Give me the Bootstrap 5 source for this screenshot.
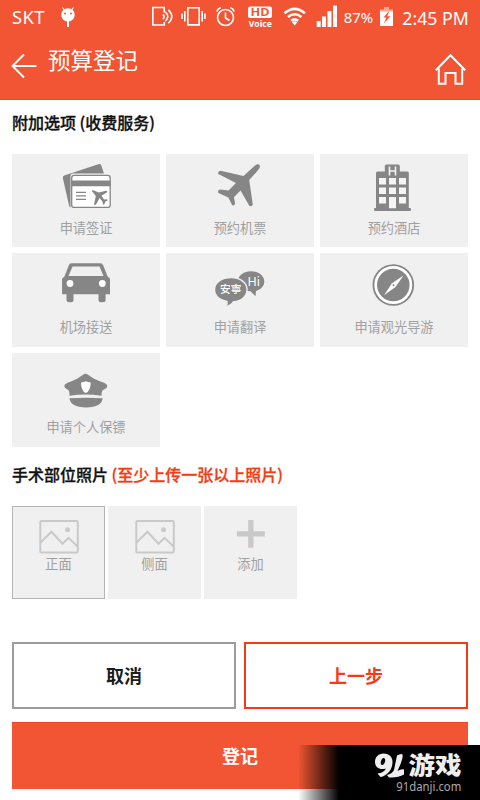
<!DOCTYPE html>
<html lang="zh-CN">
<head>
<meta charset="utf-8">
<meta name="viewport" content="width=device-width, initial-scale=1">
<title>预算登记</title>
<link href="https://cdn.jsdelivr.net/npm/bootstrap@5.3.0/dist/css/bootstrap.min.css" rel="stylesheet">
<style>
  body { font-family: "Liberation Sans", "Noto Sans CJK SC", sans-serif; color: #222; }
  .screen { width: 480px; height: 800px; }
  .topbar { background: #f25533; height: 100px; border-bottom: 1px solid #ee4523; }
  .statusbar { height: 34px; font-family: "Noto Sans", sans-serif; line-height: 33px; white-space: nowrap; }
  .carrier { width: 56px; padding-left: 12px; font-size: 18.5px; letter-spacing: .3px; }
  .statusbar svg { display: block; }
  .titlebar { height: 66px; }
  .title { font-size: 22.5px; line-height: 30px; margin: 13px 0 0 10px; }
  .home { margin: 18px 13px 0 0; }
  .section-title { font-family: "Noto Sans CJK SC", sans-serif; font-size: 16px; font-weight: 500; line-height: 24px; white-space: nowrap; color: #111; -webkit-text-stroke: .3px; }
  .first-title { padding-top: 10px; }
  .photo-title { padding-top: 15px; }
  .hint { color: #f43c14; }
  .options { display: grid; grid-template-columns: repeat(3, 148px); grid-template-rows: 93px 94px 94px; gap: 6px; margin-top: 20px; }
  .tile { background: #f0f0f0; padding-top: 6px; color: #a0a0a0; font-family: "Noto Sans CJK SC", sans-serif; font-size: 13.2px; line-height: 18px; }
  .tile .caption-text { margin-top: 7px; }
  .glyph { fill: #868686; }
  .photos { gap: 3px; margin-top: 20px; }
  .photo { width: 93px; height: 93px; background: #f0f0f0; color: #a0a0a0; font-family: "Noto Sans CJK SC", sans-serif; font-size: 13.2px; line-height: 18px; padding-top: 12px; }
  .photo svg { margin-bottom: -1px; }
  .photo.selected { box-shadow: inset 0 0 0 1px #b4b4b4; }
  .actions { margin-top: 43px; }
  .action { height: 67px; font-family: "Noto Sans CJK SC", sans-serif; font-size: 18px; font-weight: 700; border-radius: 0; padding: 0; }
  .action-cancel { border: 2px solid #9c9c9c; color: #1c1c1c; }
  .action-prev { border: 2px solid #f43c14; color: #f43c14; }
  .action-submit { background: #f25533; color: #fff; border: 0; border-top: 1px solid #f04422; margin-top: 13px; padding-bottom: 2px; }
  .watermark { right: 0; bottom: 0; width: 182px; height: 55px; background: linear-gradient(90deg, transparent 0, #000 41px); }
</style>
</head>
<body class="bg-white">
<div class="screen position-relative overflow-hidden bg-white">
  <header class="topbar text-white">
    <div class="statusbar d-flex">
      <span class="carrier">SKT</span>
      <svg width="288" height="34" viewBox="56 0 288 34" fill="none" stroke="#fff" stroke-width="1.6">
        <path d="M61.300 14.500a6.700 6.200 0 0 1 13.400 0c0 4.500-3 6.500-5.700 7v5.500h-2v-5.500c-2.700-.5-5.700-2.500-5.700-7z" fill="#fff" stroke="none"/>
        <path d="M64.500 10l-2-2.500M71.500 10l2-2.500" stroke-width="1.200"/>
        <circle cx="65" cy="13.500" r="1" fill="#f25533" stroke="none"/><circle cx="71" cy="13.500" r="1" fill="#f25533" stroke="none"/>
        <path d="M164.300 12.500V7.500h-11.500v17.500h11.500v-3M162.800 14.500q2.800 2 0 4.500M165.300 12q5 4.500 0 9.200M168.300 9.800q7 6.500 0 13.500"/>
        <path d="M187.800 7.700h11.400v17.200h-11.400zM184.800 11v10.500M182 13.500v5.500M202.200 11v10.500M205 13.500v5.500"/>
        <circle cx="225.500" cy="17.500" r="8"/><path d="M225.500 12.500v5.500l4 2.500M216.800 11.500q1-3 4-4M234.200 11.500q-1-3-4-4"/>
        <rect x="248" y="6.500" width="24" height="11.500" rx="2" fill="#fff" stroke="none"/>
        <g stroke="none" font-family="Open Sans, sans-serif" font-weight="700" text-anchor="middle">
          <text x="260" y="16.200" font-size="11.300" fill="#f25533" textLength="19" lengthAdjust="spacingAndGlyphs">HD</text>
          <text x="260.300" y="26.500" font-size="8.300" fill="#fff" textLength="23" lengthAdjust="spacingAndGlyphs">Voice</text>
        </g>
        <path d="M284.500 13.300q10.200-8.800 20.400 0M288 17q6.700-5.500 13.400 0M291.200 20.700q3.500-2.800 7 0" stroke-width="2.600"/>
        <path d="M292 22.300q2.700-2 5.400 0l-2.700 3.200z" fill="#fff" stroke="none"/>
        <path d="M316.700 21h4v6h-4zM322 16.500h4V27h-4zM327.500 11h4v16h-4zM333 5.500h4V27h-4z" fill="#fff" stroke="none"/>
      </svg>
      <svg width="33" height="34" viewBox="344 0 33 34"><text x="343.700" y="23.300" font-size="15" fill="#fff" textLength="29.500" lengthAdjust="spacingAndGlyphs">87%</text></svg>
      <svg width="25" height="34" viewBox="377 0 25 34">
        <path d="M384 7h5v2.500h4v3h-13.200v-3H384z" fill="#f9aa99"/><path d="M380 11.500h13V26h-13z" fill="#fff"/>
        <path d="M389.500 10.500l-6 7h3l-2.800 6.300 6.800-7.500h-3.200z" fill="#f25533"/>
      </svg>
      <svg width="70" height="34" viewBox="402 0 70 34"><text x="402.300" y="24.500" font-size="17.500" fill="#fff" textLength="66.500" lengthAdjust="spacingAndGlyphs">2:45 PM</text></svg>
    </div>
    <div class="titlebar d-flex align-items-start">
      <svg width="38" height="66" viewBox="0 34 38 66" fill="none" stroke="#fff" stroke-width="1.900"><path d="M36.500 66H13M24 54.500L12.500 66 24 77.500"/></svg>
      <h1 class="title fw-normal">预算登记</h1>
      <svg class="home ms-auto" width="34" height="36" viewBox="433 52 34 36" fill="none" stroke="#fff" stroke-width="2"><path d="M435.800 70.300l14.700-15.100 14.700 15.100M438.800 68.500v15.300h6.700V73h10v10.800h6.700V68.500"/></svg>
    </div>
  </header>

  <main class="px-2 mx-1">
    <h2 class="section-title first-title mb-0">附加选项 (收费服务)</h2>
    <section class="options text-center">
      <div class="tile d-flex flex-column align-items-center">
        <svg class="glyph" width="56" height="52" viewBox="58 160 56 52">
          <path d="M64.300 175.500l34-11.200q2.200-.7 3 1.300l2.700 8H73q-2.500 0-2.500 2.500v31.400q-1-.3-1.300-1.500l-6.300-27.500q-.5-2.300 1.400-3z"/>
          <rect x="71.700" y="175.400" width="38.500" height="32" rx="2.500" fill="#fff" stroke="#868686" stroke-width="1.300"/>
          <path d="M71.500 180.500h39v5.700h-39zM76 191.800h10v1.300H76zm0 3.500h10v1.300H76zm0 3.500h10v1.300H76z"/>
          <path d="M92 189.700l6.800 2.700 7.200-1.700q2 .2.700 1.700l-5.200 3.300 2.600 3.800 3-.3.500 1.300-2.400 1.300-.8 2.500-1.400.5-.4-3-3-3.700-3.500 6.500q-2 1.200-2-.5l1.700-8-3.800-4.900q-.2-1.500 1.100-1.500z"/>
        </svg>
        <span class="caption-text">申请签证</span>
      </div>
      <div class="tile d-flex flex-column align-items-center">
        <svg class="glyph" width="56" height="52" viewBox="212 160 56 52">
          <path d="M243.500 176L255 165.500c3-2.500 6-1 4.500 2.500-1 2.200-6.500 7.800-10.300 12.100l3.600 24.400c-1 2.200-2.500 1.900-3.500 1.300l-8.800-15.300-6.600 6.700 1.200 6.500c-.6 1.600-2.300 2.300-3 1.300l-3.800-7.400-9.800-4.600c-1.300-1.500.2-3 1.600-3.400l8.500.8 7.300-7.300-17.500-9c-1-1.500.8-3.200 2.200-3.300z"/>
        </svg>
        <span class="caption-text">预约机票</span>
      </div>
      <div class="tile d-flex flex-column align-items-center">
        <svg class="glyph" width="56" height="52" viewBox="366 160 56 52">
          <path d="M384.800 171.500v-5.500q0-1.500 1.500-1.500h12q1.500 0 1.500 1.500v5.500h7.500q1.500 0 1.500 1.500v35.500H376V173q0-1.500 1.500-1.500z"/>
          <rect x="374" y="208" width="37" height="3" rx="1.300"/>
          <path fill="#f5f5f5" d="M379 178h7v6.500h-7zm10 0h7v6.500h-7zm10 0h7v6.500h-7zM379 187.500h7v6.500h-7zm10 0h7v6.500h-7zm10 0h7v6.500h-7zM379 197h7v6.500h-7zm20 0h7v6.500h-7zM389 197h7v11.300h-7z"/>
          <path d="M389.500 166.500v9M395.500 166.500v9M389.500 171h6" stroke="#f3f3f3" stroke-width="1.600"/>
        </svg>
        <span class="caption-text">预约酒店</span>
      </div>
      <div class="tile d-flex flex-column align-items-center">
        <svg class="glyph" width="56" height="52" viewBox="58 259 56 52">
          <path fill-rule="evenodd" d="M71.500 263.200h29q2 0 2.700 2l4.300 11 2.500 2.500v15.600h-4.400v5.500q0 2.500-3 2.500h-1.600q-2.500 0-2.500-2.500v-5.500h-25v5.500q0 2.500-2.500 2.500h-1.500q-3 0-3-2.500v-5.500h-4.400v-15.600l2.500-2.500 4.200-11q.7-2 2.700-2zM72.500 266.500L68.500 276h35l-4-9.500z"/>
          <circle cx="70" cy="283.500" r="3.400" fill="#fff"/><circle cx="102.300" cy="283.500" r="3.400" fill="#fff"/>
        </svg>
        <span class="caption-text">机场接送</span>
      </div>
      <div class="tile d-flex flex-column align-items-center">
        <svg class="glyph" width="56" height="52" viewBox="212 259 56 52">
          <path d="M251 271.300c7.500 0 13.300 4.500 13.300 10.200 0 4.400-3.300 8-8.300 9.500l-.5 5.300-5-5c-8-.2-12.700-4.500-12.700-9.800 0-5.700 5.800-10.200 13.200-10.200z"/>
          <path stroke="#f0f0f0" stroke-width="1.400" d="M231 277.500c9 0 16 5 16 12s-5.500 11.600-13.500 12.200c-1.500 2.300-4.300 4.200-7.500 4.800 1.200-2 1.300-3.500 1-5-7.200-1.200-12.500-5.700-12.500-12 0-7 7.300-12 16.500-12z"/>
          <text x="220" y="293" font-family="Noto Sans CJK SC" font-size="10.700" font-weight="500" fill="#fff">安寧</text>
          <text x="247.500" y="286" font-family="Noto Sans" font-size="12.500" fill="#fff">Hi</text>
        </svg>
        <span class="caption-text">申请翻译</span>
      </div>
      <div class="tile d-flex flex-column align-items-center">
        <svg class="glyph" width="56" height="52" viewBox="366 259 56 52">
          <circle cx="393.300" cy="285" r="20.800"/><circle cx="393.300" cy="285" r="17.600" fill="none" stroke="#fff" stroke-width="2.700"/>
          <path fill="#fff" d="M403.500 275.500l-8 11.500-11.500 8.300 8-12z"/><circle cx="393.500" cy="285.300" r="1"/>
        </svg>
        <span class="caption-text">申请观光导游</span>
      </div>
      <div class="tile d-flex flex-column align-items-center">
        <svg class="glyph" width="56" height="52" viewBox="58 359 56 52">
          <path d="M83 374.800q2.500-2 5 0l5.500 3.700q4 2 10.500 4.200 3.300 1.300 3.300 3.300t-3.300 3.500q-3 1.200-2.300 6.300-16-2.700-32.300 0 .5-5.100-1.800-6.300-3.300-1.500-3.300-3.500t3.300-3.300q6-2.200 10-4.200z"/>
          <path d="M69.500 398.300q16.300-1.300 33.200 0-1 9-16.600 9.200-15.600-.2-16.600-9.200z"/>
          <path fill="#fff" d="M81 382.500q3-.3 4.800-1.300 1.800 1 4.900 1.300 0 8.500-4.900 10.500-4.800-2-4.800-10.500z"/>
        </svg>
        <span class="caption-text">申请个人保镖</span>
      </div>
    </section>

    <h2 class="section-title photo-title mb-0">手术部位照片 <span class="hint">(至少上传一张以上照片)</span></h2>
    <section class="photos d-flex text-center">
      <div class="photo selected">
        <svg class="d-block mx-auto" width="42" height="38" viewBox="38 518 42 38" fill="none" stroke="#c9c9c9" stroke-width="2"><rect x="40.300" y="521" width="37.500" height="31.500" rx="1.500"/><path d="M40.500 542.500l11-10.700 11 12 6-6 9.300 9"/><circle cx="67.500" cy="529.800" r="2.500" fill="#c9c9c9" stroke="none"/></svg>
        <div>正面</div>
      </div>
      <div class="photo">
        <svg class="d-block mx-auto" width="42" height="38" viewBox="38 518 42 38" fill="none" stroke="#c9c9c9" stroke-width="2"><rect x="40.300" y="521" width="37.500" height="31.500" rx="1.500"/><path d="M40.500 542.500l11-10.700 11 12 6-6 9.300 9"/><circle cx="67.500" cy="529.800" r="2.500" fill="#c9c9c9" stroke="none"/></svg>
        <div>侧面</div>
      </div>
      <div class="photo">
        <svg class="d-block mx-auto" width="42" height="38" viewBox="230 518 42 38" fill="#c9c9c9"><path d="M248.200 520h5.300v11.200h11.300v5.300h-11.300v11.300h-5.300v-11.300h-11.300v-5.300h11.300z"/></svg>
        <div>添加</div>
      </div>
    </section>

    <div class="d-flex gap-2 actions">
      <button type="button" class="btn action action-cancel flex-fill w-50">取消</button>
      <button type="button" class="btn action action-prev flex-fill w-50">上一步</button>
    </div>
    <button type="button" class="btn action action-submit w-100">登记</button>
  </main>

  <div class="watermark position-absolute">
    <svg width="182" height="55" viewBox="298 745 182 55" fill="#eee">
      <path fill-rule="evenodd" d="M383.500 753.500c6 0 9 3.500 9 9 0 7-5.500 13.500-12 14.500l-3-3.500c4-.5 7-2 8.500-5-6 2-11-1-11-6.500 0-5 3.500-8.500 8.500-8.500zm0 4.500c-2.500.5-4 6.500-1.500 7s5-6.500 1.500-7z"/>
      <path d="M397 755.500q4-2.500 5.500-1 1 3-3 12l-2 4.500q4-2.500 6.500-1.500v5q-6 3.500-15 3l-2-2.500q5-1 7-5z"/>
      <text x="408.500" y="773.500" font-family="Noto Sans CJK SC" font-weight="900" font-size="23.500" textLength="53" lengthAdjust="spacingAndGlyphs">游戏</text>
      <text x="396.300" y="791.300" font-family="Noto Sans" font-size="12" fill="#aaa" textLength="65" lengthAdjust="spacingAndGlyphs">91danji.com</text>
    </svg>
  </div>
</div>
<script src="https://cdn.jsdelivr.net/npm/bootstrap@5.3.0/dist/js/bootstrap.bundle.min.js"></script>
</body>
</html>
